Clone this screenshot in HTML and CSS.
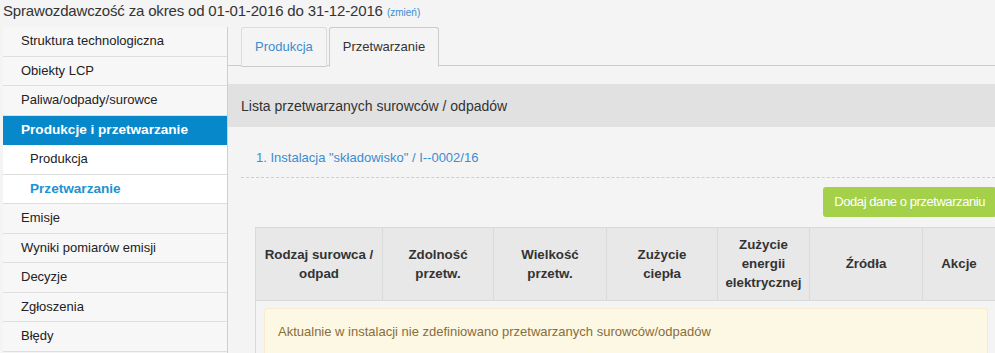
FILE: index.html
```html
<!DOCTYPE html>
<html lang="pl">
<head>
<meta charset="utf-8">
<title>Sprawozdawczość</title>
<link rel="stylesheet" href="styles.css">
</head>
<body>
<div class="page-title"><span class="title-text">Sprawozdawczość za okres od 01-01-2016 do 31-12-2016</span> <a class="change" href="#">(zmień)</a></div>
<div class="layout">
  <nav class="sidebar">
    <a class="side-item" href="#">Struktura technologiczna</a>
    <a class="side-item" href="#">Obiekty LCP</a>
    <a class="side-item" href="#">Paliwa/odpady/surowce</a>
    <a class="side-item active" href="#">Produkcje i przetwarzanie</a>
    <a class="side-item sub" href="#">Produkcja</a>
    <a class="side-item sub sub-active" href="#">Przetwarzanie</a>
    <a class="side-item" href="#">Emisje</a>
    <a class="side-item" href="#">Wyniki pomiarów emisji</a>
    <a class="side-item" href="#">Decyzje</a>
    <a class="side-item" href="#">Zgłoszenia</a>
    <a class="side-item" href="#">Błędy</a>
  </nav>
  <main class="main">
    <ul class="tabs">
      <li class="tab"><a href="#">Produkcja</a></li>
      <li class="tab tab-active"><a href="#">Przetwarzanie</a></li>
    </ul>
    <div class="band">Lista przetwarzanych surowców / odpadów</div>
    <div class="install">
      <a href="#">1. Instalacja "składowisko" / I--0002/16</a>
    </div>
    <div class="actions">
      <button class="btn-add" type="button">Dodaj dane o przetwarzaniu</button>
    </div>
    <table class="grid">
      <colgroup>
        <col class="c1"><col class="c2"><col class="c3"><col class="c4"><col class="c5"><col class="c6"><col class="c7">
      </colgroup>
      <thead>
        <tr>
          <th>Rodzaj surowca /<br>odpad</th>
          <th>Zdolność<br>przetw.</th>
          <th>Wielkość<br>przetw.</th>
          <th>Zużycie<br>ciepła</th>
          <th>Zużycie<br>energii<br>elektrycznej</th>
          <th>Źródła</th>
          <th>Akcje</th>
        </tr>
      </thead>
      <tbody>
        <tr>
          <td colspan="7"><div class="alert">Aktualnie w instalacji nie zdefiniowano przetwarzanych surowców/odpadów</div></td>
        </tr>
      </tbody>
    </table>
  </main>
</div>
</body>
</html>
```
FILE: styles.css
```css
* { box-sizing: border-box; }
html, body { margin: 0; padding: 0; }
body {
  background: #f4f4f4;
  color: #333;
  font-family: "Liberation Sans", Arial, sans-serif;
  font-size: 13px;
  width: 995px;
  height: 353px;
  overflow: hidden;
}
a { text-decoration: none; }

.page-title {
  height: 27px;
  padding: 2px 3px 0;
  font-size: 15px;
  line-height: 18px;
  color: #333;
}
.title-text {
  letter-spacing: -0.17px;
}
.change {
  font-size: 10px;
  color: #3a8dd0;
}

.layout {
  display: flex;
  align-items: flex-start;
}

.sidebar {
  width: 225px;
  margin-left: 3px;
  border-right: 1px solid #cfcfcf;
  display: flex;
  flex-direction: column;
  flex: none;
  min-height: 330px;
}
.side-item {
  display: block;
  padding: 5px 18px;
  line-height: 18.5px;
  height: 29.5px;
  border-bottom: 1px solid #dedede;
  background: #f7f7f7;
  color: #222;
  font-size: 13px;
}
.side-item.active {
  background: #0788ca;
  color: #fff;
  font-weight: bold;
  font-size: 13.6px;
  border-bottom-color: #0788ca;
}
.side-item.sub {
  background: #fff;
  padding-left: 27px;
}
.side-item.sub-active {
  color: #1c93d4;
  font-weight: bold;
  font-size: 13.6px;
}

.main {
  flex: 1;
  min-width: 0;
  overflow: hidden;
  height: 330px;
}

.tabs {
  list-style: none;
  margin: 0;
  padding: 0 0 0 13px;
  display: flex;
  border-bottom: 1px solid #cccccc;
  height: 39px;
}
.tab {
  margin-right: 2px;
  margin-bottom: -1px;
}
.tab a {
  display: block;
  padding: 10px 13px 9px;
  line-height: 18.5px;
  border: 1px solid #dcdcdc;
  border-bottom-color: #cccccc;
  border-radius: 3px 3px 0 0;
  color: #3a8dd0;
  background: #f4f4f4;
}
.tab-active a {
  color: #333;
  border-color: #cccccc;
  border-bottom-color: #f4f4f4;
}

.band {
  margin-top: 18px;
  background: #e1e1e1;
  padding: 11.5px 13px;
  font-size: 14px;
  line-height: 20px;
  color: #333;
}

.install {
  margin-left: 13px;
  padding: 21.5px 0 9.5px 15px;
  border-bottom: 1px dashed #cfcfcf;
  line-height: 18.5px;
}
.install a {
  color: #3a8dd0;
}

.actions {
  display: flex;
  justify-content: flex-end;
  margin-top: 9px;
}
.btn-add {
  font-family: inherit;
  font-size: 13px;
  letter-spacing: -0.43px;
  line-height: 18px;
  padding: 6px 11px;
  margin-right: -1px;
  border: none;
  border-radius: 3px;
  background: #a5d049;
  color: #fff;
  cursor: pointer;
}

.grid {
  margin-top: 10px;
  margin-left: 27px;
  width: 740px;
  border-collapse: collapse;
  table-layout: fixed;
}
.c1 { width: 127px; }
.c2 { width: 111px; }
.c3 { width: 113px; }
.c4 { width: 111px; }
.c5 { width: 92px; }
.c6 { width: 113px; }
.c7 { width: 73px; }
.grid th {
  background: #e8e8e8;
  border: 1px solid #dadada;
  padding: 7.5px 4px;
  line-height: 19px;
  font-size: 13.3px;
  font-weight: bold;
  color: #333;
  text-align: center;
  vertical-align: middle;
}
.grid td {
  padding: 7px 8px 8px;
  border-left: 1px solid #dadada;
}
.alert {
  background: #fcf8e3;
  border: 1px solid #faebcc;
  border-radius: 3px;
  color: #8a6d3b;
  padding: 14px 13px;
  line-height: 18.5px;
}
```
